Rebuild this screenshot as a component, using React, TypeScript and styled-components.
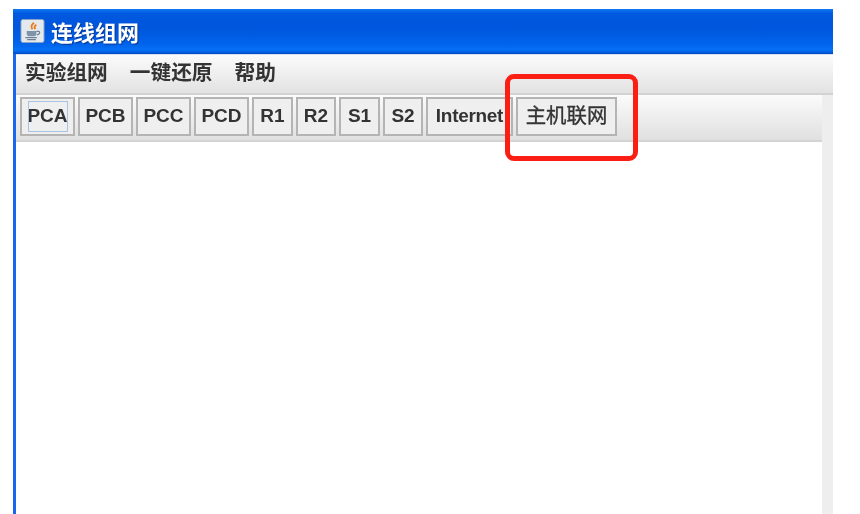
import React from "react";
import styled, { createGlobalStyle } from "styled-components";

const Global = createGlobalStyle`
  html, body { margin: 0; padding: 0; background: #fff; }
  body { font-family: "Liberation Sans", "Noto Sans CJK SC", sans-serif; overflow: hidden; }
`;

const Page = styled.div`
  position: relative;
  width: 860px;
  height: 514px;
  padding: 9px 27px 0 13px;
  box-sizing: border-box;
  overflow: hidden;
`;

const Win = styled.div`
  height: 505px;
  display: flex;
  flex-direction: column;
  border-left: 3px solid #1a66ee;
  box-sizing: border-box;
`;

const TitleBar = styled.div`
  height: 45px;
  margin-left: -3px;
  flex: none;
  display: flex;
  align-items: center;
  gap: 6px;
  padding: 0 0 1px 7px;
  box-sizing: border-box;
  background: linear-gradient(#0f78f2 0%, #0059df 10%, #0056dc 40%, #0062ea 75%, #0570f5 92%, #0047c4 100%);
`;

const AppIcon = styled.svg`
  width: 25px;
  height: 24px;
  flex: none;
`;

const Title = styled.span`
  font: bold 22px "Noto Sans CJK SC", sans-serif;
  color: #fff;
  text-shadow: 1px 1px 1px #06368f;
  filter: blur(0.3px);
`;

const MenuBar = styled.div`
  height: 41px;
  flex: none;
  display: flex;
  align-items: center;
  gap: 22px;
  padding: 0 0 6px 9px;
  box-sizing: border-box;
  background: linear-gradient(#fbfbfb, #e2e2e2);
  border-top: 1px solid #d7e0ee;
  border-bottom: 2px solid #d2d2d2;
`;

const MenuItem = styled.span`
  font: bold 20.7px "Noto Sans CJK SC", sans-serif;
  color: #333;
  filter: blur(0.3px);
`;

const Body = styled.div`
  flex: 1;
  display: flex;
  min-height: 0;
`;

const Main = styled.div`
  flex: 1;
  display: flex;
  flex-direction: column;
  background: #fff;
`;

const ToolBar = styled.div`
  height: 47px;
  flex: none;
  display: flex;
  align-items: flex-start;
  gap: 3px;
  padding: 2px 0 0 4px;
  box-sizing: border-box;
  background: linear-gradient(#fbfbfb, #e0e0e0);
  border-bottom: 2px solid #d4d4d4;
`;

const ToolButton = styled.div<{ $w: number; $focus?: boolean }>`
  position: relative;
  width: ${(p) => p.$w}px;
  height: 39px;
  flex: none;
  box-sizing: border-box;
  display: flex;
  align-items: center;
  justify-content: center;
  padding-bottom: 1px;
  background: #efefef;
  border: 2px solid #b4b4b4;
  font: bold 19px "Liberation Sans", "Noto Sans CJK SC", sans-serif;
  color: #333;
  white-space: nowrap;
  ${(p) =>
    p.$focus
      ? `&::after {
          content: "";
          position: absolute;
          left: 6px;
          right: 5px;
          top: 2px;
          bottom: 2px;
          border: 1px solid #a9c4e2;
        }`
      : ""}
`;

const ButtonLabel = styled.span<{ $tight?: boolean }>`
  filter: blur(0.3px);
  ${(p) => (p.$tight ? "letter-spacing: -0.3px;" : "")}
`;

const CjkLabel = styled.span`
  font: 400 20.4px "Noto Sans CJK SC", sans-serif;
  -webkit-text-stroke: 0.35px #333;
  margin-top: -5px;
  filter: blur(0.3px);
`;

const SideStrip = styled.div`
  width: 11px;
  flex: none;
  background: #eeeeee;
`;

const Annotation = styled.div`
  position: absolute;
  left: 505px;
  top: 74px;
  width: 133px;
  height: 87px;
  box-sizing: border-box;
  border: 5px solid #fb1e14;
  border-radius: 9px;
`;

const buttons: [string, number][] = [
  ["PCA", 55],
  ["PCB", 55],
  ["PCC", 55],
  ["PCD", 55],
  ["R1", 41],
  ["R2", 40],
  ["S1", 41],
  ["S2", 40],
  ["Internet", 87],
];

export default function App() {
  return (
    <Page>
      <Global />
      <Win>
        <TitleBar>
          <AppIcon viewBox="0 0 25 25">
            <rect x="0.5" y="0.5" width="24" height="24" rx="2" fill="#e4e9ee" stroke="#8aa3c4" />
            <path d="M14 4c-3 2.5-3.5 4-1.5 6.5M16.5 6c-2 1.500-2.500 3-1 4.500" fill="none" stroke="#e8791d" strokeWidth="2" />
            <path d="M6.500 12.500h10v3c0 1.500-1.500 2.500-3 2.500h-4c-1.500 0-3-1-3-2.500z" fill="#7f94a8" />
            <path d="M16.500 13h2.500c1.500 0 1.500 3-2 3.500" fill="none" stroke="#6d8296" strokeWidth="1.300" />
            <path d="M5 19.500h12M7 21.500h9" stroke="#6d8296" strokeWidth="1.300" />
          </AppIcon>
          <Title>连线组网</Title>
        </TitleBar>
        <MenuBar>
          <MenuItem>实验组网</MenuItem>
          <MenuItem>一键还原</MenuItem>
          <MenuItem>帮助</MenuItem>
        </MenuBar>
        <Body>
          <Main>
            <ToolBar>
              {buttons.map(([label, w], i) => (
                <ToolButton key={label} $w={w} $focus={i === 0}>
                  <ButtonLabel $tight={label === "Internet"}>{label}</ButtonLabel>
                </ToolButton>
              ))}
              <ToolButton $w={101}>
                <CjkLabel>主机联网</CjkLabel>
              </ToolButton>
            </ToolBar>
          </Main>
          <SideStrip />
        </Body>
      </Win>
      <Annotation />
    </Page>
  );
}
